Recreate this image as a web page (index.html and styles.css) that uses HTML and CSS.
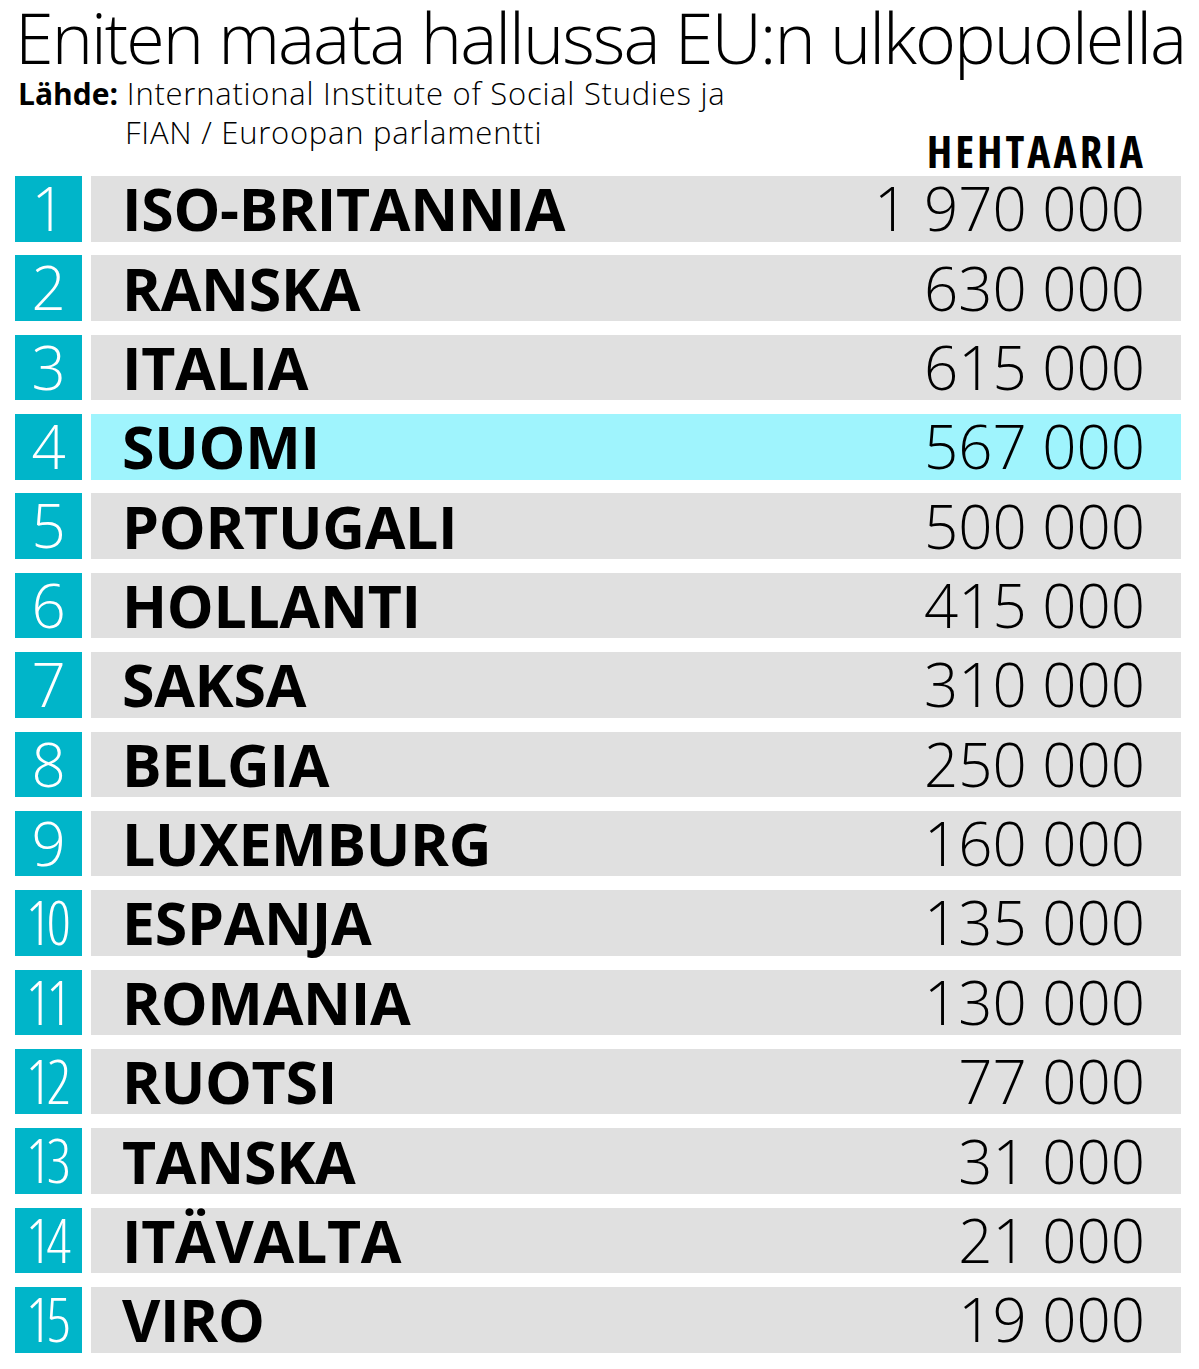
FILE: index.html
```html
<!DOCTYPE html>
<html lang="fi">
<head>
<meta charset="utf-8">
<title>Eniten maata hallussa EU:n ulkopuolella</title>
<link rel="stylesheet" href="styles.css">
</head>
<body>
<div class="chart">
  <h1 class="title">Eniten maata hallussa EU:n ulkopuolella</h1>
  <div class="head">
    <div class="source">
      <div class="src-line"><b>Lähde:</b> International Institute of Social Studies ja</div>
      <div class="src-line src-indent">FIAN / Euroopan parlamentti</div>
    </div>
    <div class="unit">HEHTAARIA</div>
  </div>
  <div class="rows">
    <div class="rank">1</div><div class="bar"><span class="name">ISO-BRITANNIA</span><span class="val">1 970 000</span></div>
    <div class="rank">2</div><div class="bar"><span class="name">RANSKA</span><span class="val">630 000</span></div>
    <div class="rank">3</div><div class="bar"><span class="name">ITALIA</span><span class="val">615 000</span></div>
    <div class="rank">4</div><div class="bar hl"><span class="name">SUOMI</span><span class="val">567 000</span></div>
    <div class="rank">5</div><div class="bar"><span class="name">PORTUGALI</span><span class="val">500 000</span></div>
    <div class="rank">6</div><div class="bar"><span class="name">HOLLANTI</span><span class="val">415 000</span></div>
    <div class="rank">7</div><div class="bar"><span class="name">SAKSA</span><span class="val">310 000</span></div>
    <div class="rank">8</div><div class="bar"><span class="name">BELGIA</span><span class="val">250 000</span></div>
    <div class="rank">9</div><div class="bar"><span class="name">LUXEMBURG</span><span class="val">160 000</span></div>
    <div class="rank two">10</div><div class="bar"><span class="name">ESPANJA</span><span class="val">135 000</span></div>
    <div class="rank two">11</div><div class="bar"><span class="name">ROMANIA</span><span class="val">130 000</span></div>
    <div class="rank two">12</div><div class="bar"><span class="name">RUOTSI</span><span class="val">77 000</span></div>
    <div class="rank two">13</div><div class="bar"><span class="name">TANSKA</span><span class="val">31 000</span></div>
    <div class="rank two">14</div><div class="bar"><span class="name">ITÄVALTA</span><span class="val">21 000</span></div>
    <div class="rank two">15</div><div class="bar"><span class="name">VIRO</span><span class="val">19 000</span></div>
  </div>
</div>
</body>
</html>
```
FILE: styles.css
```css
html, body {
  margin: 0;
  padding: 0;
  background: #ffffff;
}
body {
  font-family: "Open Sans", "Noto Sans", sans-serif;
  color: #000;
}
.chart {
  width: 1199px;
  padding: 0 18px 0 15px;
  box-sizing: border-box;
}
.title {
  margin: 0;
  padding-left: 0;
  font-family: "Open Sans", sans-serif;
  font-stretch: 100%;
  font-weight: 300;
  font-size: 70px;
  line-height: 74px;
  letter-spacing: -2px;
  white-space: nowrap;
}
.head {
  display: flex;
  justify-content: space-between;
  align-items: flex-end;
  margin-top: 0;
}
.source {
  font-family: "Open Sans", sans-serif;
  font-stretch: 100%;
  font-weight: 300;
  font-size: 31px;
  line-height: 38px;
  letter-spacing: 0.75px;
  padding-left: 3px;
  white-space: nowrap;
}
.source b {
  font-weight: 700;
  font-size: 30px;
  letter-spacing: 0;
}
.src-indent {
  padding-left: 107px;
}
.unit {
  font-family: "Open Sans", sans-serif;
  font-stretch: 75%;
  font-weight: 700;
  font-size: 44px;
  line-height: 44px;
  letter-spacing: 3px;
  margin-right: 35px;
  margin-bottom: -22px;
}
.rows {
  margin-top: 25px;
  display: grid;
  grid-template-columns: 67px 1fr;
  column-gap: 9px;
  grid-auto-rows: 65.5px;
  row-gap: 13.86px;
}
.rank {
  background: #00b5c9;
  color: #ffffff;
  font-family: "Open Sans", sans-serif;
  font-weight: 300;
  font-stretch: 100%;
  font-size: 60px;
  line-height: 65px;
  text-align: center;
}
.rank.two {
  font-stretch: 75%;
  letter-spacing: -4px;
  text-indent: -4px;
}
.bar {
  background: #e0e0e0;
  display: flex;
  justify-content: space-between;
  align-items: center;
  padding: 0 36px 0 31px;
}
.bar.hl {
  background: #9ff4fd;
}
.name {
  font-weight: 700;
  font-size: 59px;
  line-height: 65px;
  letter-spacing: -0.3px;
}
.val {
  font-weight: 300;
  font-size: 60px;
  line-height: 65px;
}
```
